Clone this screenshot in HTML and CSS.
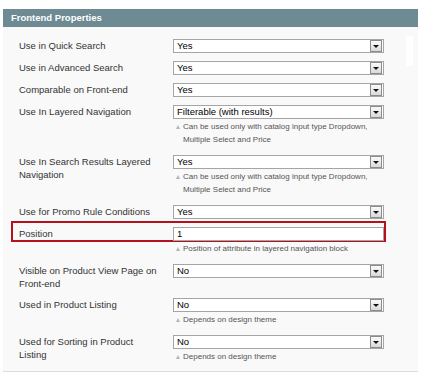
FILE: index.html
```html
<!DOCTYPE html>
<html lang="en">
<head>
    <meta charset="UTF-8">
    <title>Frontend Properties</title>
    <link rel="stylesheet" href="styles.css">
</head>
<body>
    <div class="panel">
        <div class="panel-head">Frontend Properties</div>

        <div class="fieldset">
            <span class="scroll-gap"></span>

            <div class="row">
                <label>Use in Quick Search</label>
                <div class="value">
                    <div class="select">Yes<span class="arrow"></span></div>
                </div>
            </div>

            <div class="row">
                <label>Use in Advanced Search</label>
                <div class="value">
                    <div class="select">Yes<span class="arrow"></span></div>
                </div>
            </div>

            <div class="row">
                <label>Comparable on Front-end</label>
                <div class="value">
                    <div class="select">Yes<span class="arrow"></span></div>
                </div>
            </div>

            <div class="row">
                <label>Use In Layered Navigation</label>
                <div class="value">
                    <div class="select">Filterable (with results)<span class="arrow"></span></div>
                    <p class="note">Can be used only with catalog input type Dropdown, Multiple Select and Price</p>
                </div>
            </div>

            <div class="row">
                <label>Use In Search Results Layered Navigation</label>
                <div class="value">
                    <div class="select">Yes<span class="arrow"></span></div>
                    <p class="note">Can be used only with catalog input type Dropdown, Multiple Select and Price</p>
                </div>
            </div>

            <div class="row">
                <label>Use for Promo Rule Conditions</label>
                <div class="value">
                    <div class="select">Yes<span class="arrow"></span></div>
                </div>
            </div>

            <!-- highlighted field -->
            <div class="row marked">
                <span class="highlight"></span>
                <label>Position</label>
                <div class="value">
                    <div class="input">1</div>
                    <p class="note">Position of attribute in layered navigation block</p>
                </div>
            </div>

            <div class="row">
                <label>Visible on Product View Page on Front-end</label>
                <div class="value">
                    <div class="select">No<span class="arrow"></span></div>
                </div>
            </div>

            <div class="row">
                <label>Used in Product Listing</label>
                <div class="value">
                    <div class="select">No<span class="arrow"></span></div>
                    <p class="note">Depends on design theme</p>
                </div>
            </div>

            <div class="row">
                <label>Used for Sorting in Product Listing</label>
                <div class="value">
                    <div class="select">No<span class="arrow"></span></div>
                    <p class="note">Depends on design theme</p>
                </div>
            </div>
        </div>
    </div>
</body>
</html>
```

FILE: styles.css
```css
/* Page */
body {
    margin: 0;
    background: white;
    font-family: "Liberation Sans", Arial, sans-serif;
    color: #333;
}

.panel {
    margin: 9px 0 0 3px;
    width: 415px;
}

/* Section header */
.panel-head {
    height: 18px;
    line-height: 18px;
    padding-left: 8px;
    background: #6e8b93;
    color: white;
    font-size: 9.5px;
    font-weight: bold;
}

.fieldset {
    position: relative;
    background: #f9f9f9;
    padding: 12px 0 7px 16px;
    border-bottom: 1px solid #dcdcdc;
}

/* little white strip on the right */
.scroll-gap {
    position: absolute;
    top: 9px;
    left: 403px;
    width: 7px;
    height: 30px;
    background: white;
}

/* Rows */
.row {
    position: relative;
    display: grid;
    grid-template-columns: 154px 211px;
    margin-bottom: 8px;
}
.row:last-child { margin-bottom: 0; }

.row label {
    font-size: 9.5px;
    line-height: 13px;
    padding-right: 10px;
}

/* Select boxes */
.select, .input {
    position: relative;
    height: 12px;
    line-height: 12px;
    padding-left: 3px;
    border: 1px solid #a5a5a5;
    background: white;
    color: #000;
    font-size: 9.5px;
}

.arrow {
    position: absolute;
    top: 0;
    right: 1px;
    width: 10px;
    height: 10px;
    border: 1px solid #8c8c8c;
    background: linear-gradient(#fbfbfb, #d9d9d9);
}
.arrow::after {
    content: "";
    position: absolute;
    left: 2px;
    top: 4px;
    border-left: 3px solid transparent;
    border-right: 3px solid transparent;
    border-top: 3px solid #111;
}

/* Notes under fields */
.note {
    margin: 0;
    padding: 1px 0 1px 10px;
    position: relative;
    font-size: 8px;
    line-height: 13px;
    color: #555;
}
.note::before {
    content: "";
    position: absolute;
    left: 3px;
    top: 6px;
    border-left: 2.5px solid transparent;
    border-right: 2.5px solid transparent;
    border-bottom: 4px solid #b5b5b5;
}

/* Red marker round Position */
.highlight {
    position: absolute;
    left: -8px;
    top: -6px;
    width: 371px;
    height: 17px;
    border: 2px solid #b3121c;
}
```
